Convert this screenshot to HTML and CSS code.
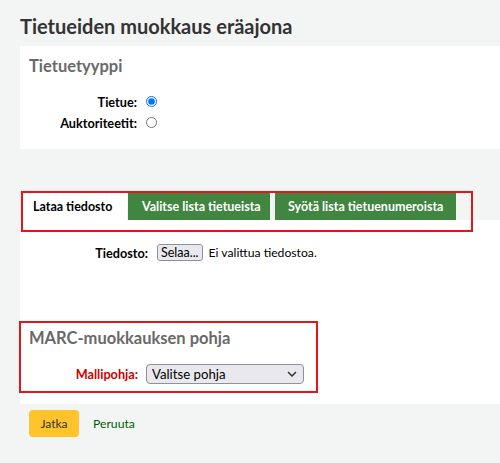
FILE: index.html
```html
<!DOCTYPE html>
<html lang="fi">
<head>
<meta charset="utf-8">
<title>Tietueiden muokkaus eräajona</title>
<link rel="stylesheet" href="styles.css">
</head>
<body>
<div class="page">
  <h1 class="title">Tietueiden muokkaus eräajona</h1>

  <section class="panel type-panel">
    <h3 class="legend">Tietuetyyppi</h3>
    <div class="form-row">
      <label class="row-label" for="r1">Tietue:</label>
      <input class="radio" type="radio" id="r1" name="rt" checked>
    </div>
    <div class="form-row">
      <label class="row-label" for="r2">Auktoriteetit:</label>
      <input class="radio" type="radio" id="r2" name="rt">
    </div>
  </section>

  <div class="tabs">
    <ul class="tab-nav">
      <li class="tab active">Lataa tiedosto</li>
      <li class="tab tab-green tab-1">Valitse lista tietueista</li>
      <li class="tab tab-green tab-2">Syötä lista tietuenumeroista</li>
    </ul>
    <div class="annot annot-tabs"></div>
    <div class="tab-panel">
      <div class="file-row">
        <span class="file-label">Tiedosto:</span>
        <span class="file-btn">Selaa...</span>
        <span class="file-text">Ei valittua tiedostoa.</span>
      </div>
      <fieldset class="marc">
        <h3 class="legend">MARC-muokkauksen pohja</h3>
        <div class="form-row">
          <span class="row-label required">Mallipohja:</span>
          <span class="select">
            <span class="select-text">Valitse pohja</span>
            <svg class="chev" width="10" height="6" viewBox="0 0 10 6"><path d="M1 1 L5 5 L9 1" fill="none" stroke="#333" stroke-width="1.5"/></svg>
          </span>
        </div>
      </fieldset>
    </div>
  </div>

  <div class="actions">
    <span class="btn-jatka">Jatka</span>
    <a class="link-cancel" href="#">Peruuta</a>
  </div>
</div>
</body>
</html>
```

FILE: styles.css
```css
* { box-sizing: border-box; }
html, body { margin: 0; padding: 0; }
body {
  background: #f3f4f4;
  font-family: Lato, "Open Sans", sans-serif;
  font-size: 12.5px;
  color: #000;
  width: 500px;
  height: 463px;
  overflow: hidden;
}
.page { padding-left: 20px; }
.title {
  margin: 0;
  padding-top: 13px;
  font-size: 20px;
  line-height: 27px;
  font-weight: 700;
  color: #333;
  height: 46px;
}
.panel { background: #fff; }
.type-panel { height: 103px; padding: 9px 0 0 9px; }
.legend {
  margin: 0;
  font-size: 16.5px;
  line-height: 22px;
  font-weight: 700;
  color: #696969;
}
.form-row {
  display: flex;
  align-items: center;
  height: 21px;
}
.type-panel .legend { margin-bottom: 14px; }
.row-label {
  width: 108px;
  text-align: right;
  font-weight: 700;
  font-size: 12.7px;
  margin-right: 9px;
}
.radio {
  margin: 0;
  width: 11px;
  height: 11px;
}
.tabs { position: relative; margin-top: 44px; }
.tab-nav {
  list-style: none;
  margin: 0;
  padding: 0 0 0 3px;
  display: flex;
  height: 27px;
}
.tab {
  height: 27px;
  line-height: 27px;
  font-weight: 700;
  white-space: nowrap;
}
.tab.active { background: #fff; color: #000; width: 104px; padding-left: 10px; margin-right: 1px; }
.tab-green { background: #408540; color: #fff; }
.tab-1 { margin-right: 5px; width: 142px; padding-left: 14px; }
.tab-2 { width: 181px; padding-left: 13px; }
.annot {
  position: absolute;
  border: 2px solid #e8141b;
  pointer-events: none;
}
.annot-tabs { left: 1px; top: -2px; width: 452px; height: 41px; }
.tab-panel { background: #fff; height: 184px; padding-top: 24px; }
.file-row { display: flex; align-items: center; height: 17px; }
.file-label { width: 128px; text-align: right; font-weight: 700; font-size: 12.7px; margin-right: 9px; }
.file-btn {
  height: 17px;
  line-height: 15px;
  padding: 0 3px;
  border: 1px solid #8f8f9d;
  border-radius: 3px;
  background: #e9e9ed;
  margin-right: 6px;
  font-size: 12.5px;
}
.file-text { color: #000; font-size: 12.2px; }
.marc {
  margin: 60px 0 0 -1px;
  width: 299px;
  height: 72px;
  border: 2px solid #e8141b;
  padding: 4px 0 0 8px;
}
.marc .legend { margin-bottom: 14px; }
.marc .row-label { width: 109px; margin-right: 8px; }
.required { color: #cc0000; }
.select {
  display: flex;
  align-items: center;
  justify-content: space-between;
  width: 158px;
  height: 20px;
  border: 1px solid #8f8f9d;
  border-radius: 4px;
  background: #e9e9ed;
  padding: 0 6px 0 5px;
  font-size: 13.2px;
}
.actions { display: flex; align-items: center; padding: 6px 0 0 9px; }
.btn-jatka {
  width: 50px;
  height: 27px;
  line-height: 27px;
  text-align: center;
  background: #ffc32b;
  border-radius: 4px;
  color: #333;
  font-size: 12px;
}
.link-cancel { color: #006100; text-decoration: none; margin-left: 14px; font-size: 12.2px; }
```
